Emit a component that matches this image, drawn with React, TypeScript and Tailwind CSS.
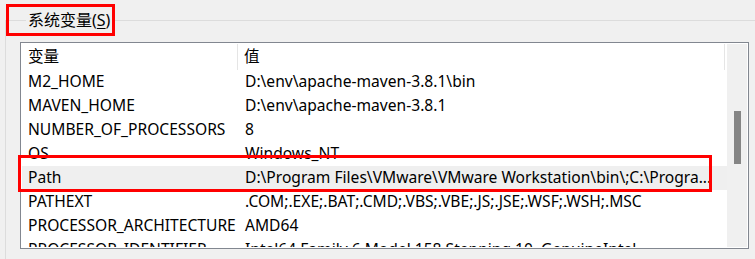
import React from 'react';

const rows = [
  { name: 'M2_HOME', value: 'D:\\env\\apache-maven-3.8.1\\bin' },
  { name: 'MAVEN_HOME', value: 'D:\\env\\apache-maven-3.8.1' },
  { name: 'NUMBER_OF_PROCESSORS', value: '8' },
  { name: 'OS', value: 'Windows_NT' },
  { name: 'Path', value: 'D:\\Program Files\\VMware\\VMware Workstation\\bin\\;C:\\Progra...', selected: true },
  { name: 'PATHEXT', value: '.COM;.EXE;.BAT;.CMD;.VBS;.VBE;.JS;.JSE;.WSF;.WSH;.MSC' },
  { name: 'PROCESSOR_ARCHITECTURE', value: 'AMD64' },
  { name: 'PROCESSOR_IDENTIFIER', value: 'Intel64 Family 6 Model 158 Stepping 10, GenuineIntel' },
];

export default function App() {
  return (
    <div
      className="relative w-[755px] h-[259px] overflow-hidden bg-[#f0f0f0] text-[15.6px] text-black"
      style={{ fontFamily: '"Noto Sans", "Noto Sans CJK SC", sans-serif' }}
    >
      <fieldset className="mt-[9px] ml-[5px] w-[800px] h-[320px] border border-[#dcdcdc] pl-[14px] pt-[11px]">
        <legend className="ml-[6px] px-[2px] leading-[22px] text-[16px]">
          系统变量(<span className="underline underline-offset-2">S</span>)
        </legend>

        <div className="w-[729px] h-[207px] border border-[#828790] bg-white p-px flex">
          <div className="flex-1 min-w-0 overflow-hidden">
            <div className="flex h-[26px] items-center">
              <div className="w-[216px] shrink-0 pl-[6px] h-full flex items-center border-r border-[#e5e5e5]">变量</div>
              <div className="w-[487px] shrink-0 pl-[6px] h-full flex items-center border-r border-[#e5e5e5]">值</div>
            </div>
            {rows.map((r) => (
              <div
                key={r.name}
                className={`flex h-[24px] items-center whitespace-nowrap ${r.selected ? 'bg-[#efefef]' : ''}`}
              >
                <div className="w-[217px] shrink-0 pl-[6px] overflow-hidden">{r.name}</div>
                <div className="w-[486px] shrink-0 pl-[6px] overflow-hidden">{r.value}</div>
              </div>
            ))}
          </div>
          <div className="w-[20px] shrink-0 bg-[#f0f0f0] pt-[67px]">
            <div className="ml-[7px] w-[7px] h-[53px] bg-[#858585]" />
          </div>
        </div>
      </fieldset>

      <div className="absolute left-[6px] top-[4px] w-[109px] h-[32px] border-[3px] border-[#ff0000]" />
      <div className="absolute left-[18px] top-[155px] w-[694px] h-[37px] border-[3px] border-[#ff0000]" />
    </div>
  );
}
